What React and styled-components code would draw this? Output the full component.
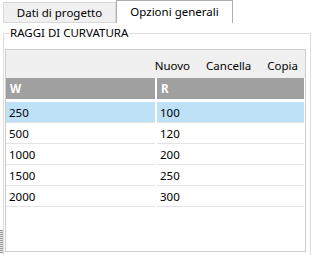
import React from 'react';
import styled, { createGlobalStyle } from 'styled-components';

const GlobalStyle = createGlobalStyle`
  html, body {
    margin: 0;
    padding: 0;
    background: #ffffff;
  }
  body {
    font-family: "Noto Sans", "Open Sans", sans-serif;
    font-size: 11.5px;
    color: #000000;
    overflow: hidden;
  }
`;

const Window = styled.div`
  display: flex;
  width: 321px;
  height: 255px;
  overflow: hidden;
`;

const Grip = styled.div`
  /* splitter grip on the left edge */
  width: 3px;
  height: 23px;
  align-self: flex-end;
  margin-bottom: 2px;
  background-image: repeating-linear-gradient(to bottom, #9a9a9a 0 1px, #e6e6e6 1px 2px);
`;

const Main = styled.div`
  display: flex;
  flex-direction: column;
  flex: 1;
`;

const TabStrip = styled.div`
  display: flex;
  align-items: flex-end;
  height: 25px;
`;

const Tab = styled.div`
  box-sizing: border-box;
  width: ${props => props.$width}px;
  height: ${props => (props.$active ? 23 : 21)}px;
  display: flex;
  align-items: center;
  justify-content: center;
  padding-bottom: ${props => (props.$active ? 2 : 1)}px;
  background: ${props => (props.$active ? '#ffffff' : '#f0f0f0')};
  border: 1px solid ${props => (props.$active ? '#adadad' : '#d9d9d9')};
  border-bottom: ${props => (props.$active ? 'none' : '1px solid #d9d9d9')};
  white-space: nowrap;
`;

const GroupBox = styled.fieldset`
  box-sizing: border-box;
  width: 308px;
  margin: 3px 0 0 0;
  padding: 0 4px 6px 1px;
  border: 1px solid #dcdcdc;
  min-width: 0;
`;

const GroupTitle = styled.legend`
  margin-left: 4px;
  padding: 0 1px;
  line-height: 14px;
`;

const Table = styled.div`
  box-sizing: border-box;
  width: 301px;
  height: 203px;
  margin-top: 9px;
  border: 1px solid #cdcdcd;
  background: #ffffff;
  display: flex;
  flex-direction: column;
`;

const Toolbar = styled.div`
  display: flex;
  justify-content: flex-end;
  align-items: center;
  gap: 16px;
  height: 28px;
  padding: 3px 7px 0 0;
  box-sizing: border-box;
  background: #f0f0f0;
`;

const ToolButton = styled.span`
  color: #000000;
`;

const Rows = styled.div`
  display: grid;
  grid-template-columns: 149px 147px;
  grid-template-rows: 24px;
  grid-auto-rows: 21px;
  column-gap: 2px;
  align-content: start;
`;

const HeaderCell = styled.div`
  align-self: start;
  height: 21px;
  display: flex;
  align-items: center;
  padding-left: 4px;
  background: #a0a0a0;
  color: #ffffff;
  font-weight: bold;
`;

const Cell = styled.div`
  box-sizing: border-box;
  display: flex;
  align-items: center;
  padding-left: 3px;
  border-bottom: 1px solid #e3e3e3;
  background: ${props => (props.$selected ? '#bfe1f8' : '#ffffff')};
`;

const radii = [
  { w: 250, r: 100 },
  { w: 500, r: 120 },
  { w: 1000, r: 200 },
  { w: 1500, r: 250 },
  { w: 2000, r: 300 },
];

function App() {
  return (
    <>
      <GlobalStyle />
      <Window>
        <Grip />
        <Main>
          <TabStrip>
            <Tab $width={113}>Dati di progetto</Tab>
            <Tab $width={117} $active>
              Opzioni generali
            </Tab>
          </TabStrip>
          <GroupBox>
            <GroupTitle>RAGGI DI CURVATURA</GroupTitle>
            <Table>
              <Toolbar>
                <ToolButton>Nuovo</ToolButton>
                <ToolButton>Cancella</ToolButton>
                <ToolButton>Copia</ToolButton>
              </Toolbar>
              <Rows>
                <HeaderCell>W</HeaderCell>
                <HeaderCell>R</HeaderCell>
                {radii.map((row, i) => (
                  <React.Fragment key={row.w}>
                    <Cell $selected={i === 0}>{row.w}</Cell>
                    <Cell $selected={i === 0}>{row.r}</Cell>
                  </React.Fragment>
                ))}
              </Rows>
            </Table>
          </GroupBox>
        </Main>
      </Window>
    </>
  );
}

export default App;
